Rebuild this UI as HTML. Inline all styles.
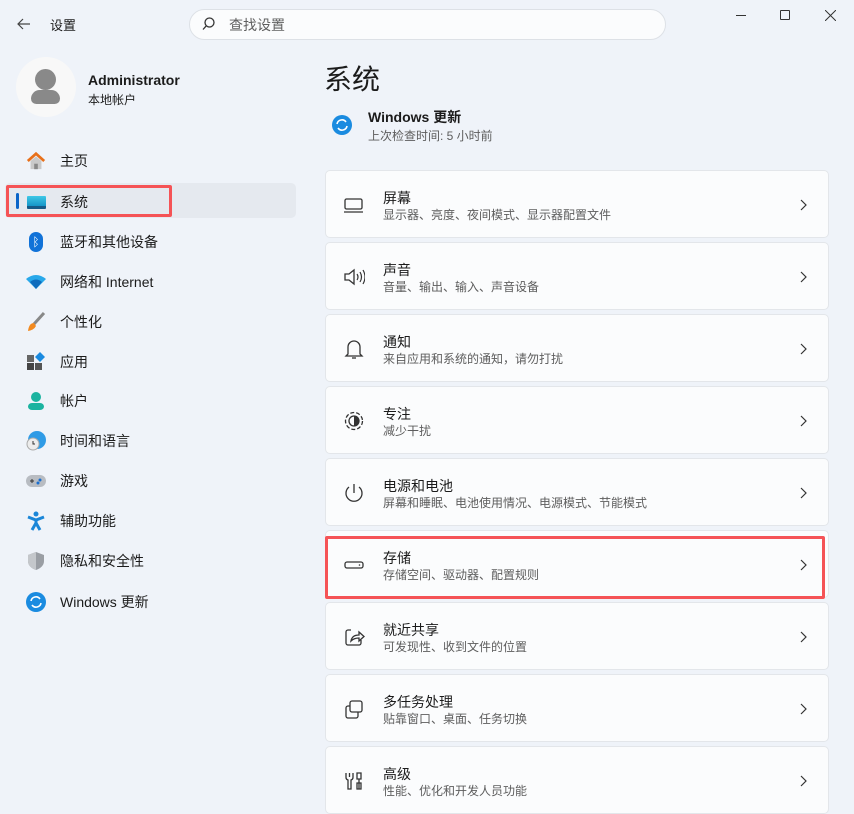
<!DOCTYPE html>
<html><head><meta charset="utf-8"><style>
*{box-sizing:border-box;margin:0;padding:0}
body{width:854px;height:799px;overflow:hidden;background:#eff3f9;font-family:"Liberation Sans","Noto Sans CJK SC",sans-serif;color:#1b1b1b;position:relative}
.abs{position:absolute}
.nav{position:absolute;left:26px;font-size:14px;display:flex;align-items:center}
.nav .ic{width:20px;height:20px;margin-right:14px;display:flex;align-items:center;justify-content:center}
.card{position:absolute;left:325px;width:504px;height:68px;background:#fbfcfd;border:1px solid #e3e6ea;border-radius:5px}
.card .t{position:absolute;left:57px;top:17px;font-size:14px}
.card .s{position:absolute;left:57px;top:35px;font-size:12px;color:#5d5d5d}
.card .i{position:absolute;left:17px;top:23px;width:22px;height:22px}
.card .ch{position:absolute;right:20px;top:28px;width:8px;height:12px}
</style></head><body>
<svg class="abs" style="left:16px;top:16px" width="16" height="16" viewBox="0 0 16 16"><path d="M14 8H2M7 3L2 8l5 5" stroke="#444" stroke-width="1.2" fill="none"/></svg>
<div class="abs" style="left:50px;top:15px;font-size:13px">设置</div>
<div class="abs" style="left:189px;top:9px;width:477px;height:31px;background:#fbfcfd;border:1px solid #dde1e6;border-radius:16px"></div>
<svg class="abs" style="left:201px;top:16px" width="16" height="16" viewBox="0 0 16 16"><circle cx="8.5" cy="6.5" r="4.5" stroke="#333" stroke-width="1.3" fill="none"/><path d="M5.3 9.8l-3.3 3.7" stroke="#333" stroke-width="1.3"/></svg>
<div class="abs" style="left:229px;top:15px;font-size:14px;color:#5f5f5f">查找设置</div>
<div class="abs" style="left:736px;top:15px;width:10px;height:1px;background:#333"></div>
<div class="abs" style="left:780px;top:10px;width:10px;height:10px;border:1px solid #333;border-radius:1px"></div>
<svg class="abs" style="left:825px;top:10px" width="11" height="11"><path d="M0 0L11 11M11 0L0 11" stroke="#333" stroke-width="1"/></svg>
<div class="abs" style="left:16px;top:57px;width:60px;height:60px;border-radius:50%;background:#f8f8f8"></div>
<div class="abs" style="left:35px;top:69px;width:21px;height:21px;border-radius:50%;background:#898989"></div>
<div class="abs" style="left:31px;top:90px;width:29px;height:14px;border-radius:10px 10px 6px 6px;background:#898989"></div>
<div class="abs" style="left:88px;top:72px;font-size:14px;font-weight:bold">Administrator</div>
<div class="abs" style="left:88px;top:91px;font-size:12px">本地帐户</div>
<div class="abs" style="left:5px;top:183px;width:291px;height:35px;background:#e5e9ef;border-radius:5px"></div>
<div class="abs" style="left:16px;top:193px;width:3px;height:16px;background:#0a64c8;border-radius:2px"></div>
<div class="abs" style="left:6px;top:185px;width:166px;height:32px;border:3px solid #f55356;border-radius:2px"></div>
<div class="nav" style="top:151px"><div class="ic"><svg width="22" height="20" viewBox="0 0 22 20"><path d="M2 10L11 2l9 8" stroke="#e8701a" stroke-width="3" fill="none"/><path d="M5 10v9h12v-9L11 5z" fill="#c9c9c9"/><rect x="9" y="13" width="4" height="6" fill="#888"/></svg></div>主页</div>
<div class="nav" style="top:192px"><div class="ic"><div style="width:19px;height:13px;background:linear-gradient(#3fc8e6,#1596c7);border-bottom:3px solid #155a87;border-radius:1px"></div></div>系统</div>
<div class="nav" style="top:232px"><div class="ic"><div style="width:14px;height:20px;border-radius:7px;background:#1172d8;color:#fff;font-size:12px;text-align:center;line-height:20px">ᛒ</div></div>蓝牙和其他设备</div>
<div class="nav" style="top:272px"><div class="ic"><svg width="20" height="16" viewBox="0 0 20 16"><path d="M0 5Q10-3 20 5L10 15z" fill="#28a8ea"/><path d="M4 8Q10 3 16 8L10 15z" fill="#0f6cbd"/></svg></div>网络和 Internet</div>
<div class="nav" style="top:312px"><div class="ic"><svg width="20" height="20"><path d="M18 1L8 12" stroke="#888" stroke-width="3"/><path d="M8 11q-5 0-6 8q6-1 8-5z" fill="#f28a20"/></svg></div>个性化</div>
<div class="nav" style="top:352px"><div class="ic"><svg width="20" height="20"><rect x="1" y="3" width="7" height="7" fill="#666"/><rect x="1" y="11" width="7" height="7" fill="#444"/><rect x="9" y="11" width="7" height="7" fill="#555"/><path d="M14 0l5 5-5 5-5-5z" fill="#1a8ae0"/></svg></div>应用</div>
<div class="nav" style="top:391px"><div class="ic"><svg width="20" height="20"><circle cx="10" cy="6" r="5" fill="#1bb3a0"/><rect x="2" y="12" width="16" height="7" rx="4" fill="#1bb3a0"/></svg></div>帐户</div>
<div class="nav" style="top:431px"><div class="ic"><svg width="20" height="20"><circle cx="11" cy="9" r="9" fill="#2f9be6"/><circle cx="7" cy="13" r="6" fill="#ececec" stroke="#aaa"/><path d="M7 10v3h2" stroke="#333" fill="none"/></svg></div>时间和语言</div>
<div class="nav" style="top:471px"><div class="ic"><svg width="20" height="14"><rect x="0" y="1" width="20" height="12" rx="6" fill="#b8bcc2"/><circle cx="14" cy="6" r="1.5" fill="#1a6fd0"/><circle cx="12" cy="9" r="1.5" fill="#1a6fd0"/><path d="M4 7h4M6 5v4" stroke="#333"/></svg></div>游戏</div>
<div class="nav" style="top:511px"><div class="ic"><svg width="20" height="20"><circle cx="10" cy="3" r="2.5" fill="#1a86d8"/><path d="M2 6l8 3 8-3M10 9v3l-4 7M10 12l4 7" stroke="#1a86d8" stroke-width="3" fill="none"/></svg></div>辅助功能</div>
<div class="nav" style="top:551px"><div class="ic"><svg width="18" height="20"><path d="M9 1l8 3v6q0 6-8 9-8-3-8-9V4z" fill="#9a9ea4"/><path d="M9 1v18q-8-3-8-9V4z" fill="#c4c7cb"/></svg></div>隐私和安全性</div>
<div class="nav" style="top:592px"><div class="ic"><svg width="20" height="20"><circle cx="10" cy="10" r="10" fill="#1a8be0"/><path d="M5 9a5 5 0 0 1 9-2M15 11a5 5 0 0 1-9 2" stroke="#fff" stroke-width="1.6" fill="none"/></svg></div>Windows 更新</div>
<div class="abs" style="left:324px;top:58px;font-size:28px">系统</div>
<svg class="abs" style="left:332px;top:115px" width="20" height="20"><circle cx="10" cy="10" r="10" fill="#1a8be0"/><path d="M5 9a5 5 0 0 1 9-2M15 11a5 5 0 0 1-9 2" stroke="#fff" stroke-width="1.6" fill="none"/></svg>
<div class="abs" style="left:368px;top:107px;font-size:14px;font-weight:bold">Windows 更新</div>
<div class="abs" style="left:368px;top:127px;font-size:12px;color:#5d5d5d">上次检查时间: 5 小时前</div>

<div class="card" style="top:170px"><svg class="i" viewBox="0 0 22 22"><rect x="2" y="5" width="17" height="10" rx="1.5" stroke="#333" stroke-width="1.3" fill="none"/><path d="M1 18h19" stroke="#333" stroke-width="1.3"/></svg><div class="t">屏幕</div><div class="s">显示器、亮度、夜间模式、显示器配置文件</div><svg class="ch"><path d="M1 1l5 5-5 5" stroke="#333" fill="none" stroke-width="1.2"/></svg></div>
<div class="card" style="top:242px"><svg class="i" viewBox="0 0 22 22"><path d="M2 8h4l5-4v14l-5-4H2z" stroke="#333" stroke-width="1.3" fill="none"/><path d="M14 8q2 3 0 6M17 6q3 5 0 10M20 4q4 7 0 14" stroke="#333" stroke-width="1.2" fill="none"/></svg><div class="t">声音</div><div class="s">音量、输出、输入、声音设备</div><svg class="ch"><path d="M1 1l5 5-5 5" stroke="#333" fill="none" stroke-width="1.2"/></svg></div>
<div class="card" style="top:314px"><svg class="i" viewBox="0 0 22 22"><path d="M5 16V9a6 6 0 0 1 12 0v7l2 2H3z" stroke="#333" stroke-width="1.3" fill="none"/><path d="M9 20h4" stroke="#333" stroke-width="1.3"/></svg><div class="t">通知</div><div class="s">来自应用和系统的通知，请勿打扰</div><svg class="ch"><path d="M1 1l5 5-5 5" stroke="#333" fill="none" stroke-width="1.2"/></svg></div>
<div class="card" style="top:386px"><svg class="i" viewBox="0 0 22 22"><circle cx="11" cy="11" r="8.5" stroke="#333" stroke-width="1.3" fill="none" stroke-dasharray="4 2"/><circle cx="11" cy="11" r="5" stroke="#333" stroke-width="1.3" fill="none"/><path d="M11 6a5 5 0 0 1 0 10z" fill="#333"/></svg><div class="t">专注</div><div class="s">减少干扰</div><svg class="ch"><path d="M1 1l5 5-5 5" stroke="#333" fill="none" stroke-width="1.2"/></svg></div>
<div class="card" style="top:458px"><svg class="i" viewBox="0 0 22 22"><path d="M11 2v9M6 5a8 8 0 1 0 10 0" stroke="#333" stroke-width="1.3" fill="none"/></svg><div class="t">电源和电池</div><div class="s">屏幕和睡眠、电池使用情况、电源模式、节能模式</div><svg class="ch"><path d="M1 1l5 5-5 5" stroke="#333" fill="none" stroke-width="1.2"/></svg></div>
<div class="card" style="top:530px"><svg class="i" viewBox="0 0 22 22"><rect x="2" y="8" width="18" height="6" rx="2" stroke="#333" stroke-width="1.3" fill="none"/><circle cx="16.5" cy="11" r=".8" fill="#333"/></svg><div class="t">存储</div><div class="s">存储空间、驱动器、配置规则</div><svg class="ch"><path d="M1 1l5 5-5 5" stroke="#333" fill="none" stroke-width="1.2"/></svg></div>
<div class="abs" style="left:325px;top:536px;width:500px;height:63px;border:3px solid #f55356;border-radius:2px"></div>
<div class="card" style="top:602px"><svg class="i" viewBox="0 0 22 22"><path d="M8 4H5a2 2 0 0 0-2 2v11a2 2 0 0 0 2 2h11a2 2 0 0 0 2-2v-3" stroke="#333" stroke-width="1.3" fill="none"/><path d="M8 15q1-6 8-6V6l5 4.5-5 4.5v-3q-5 0-8 3z" stroke="#333" stroke-width="1.3" fill="none"/></svg><div class="t">就近共享</div><div class="s">可发现性、收到文件的位置</div><svg class="ch"><path d="M1 1l5 5-5 5" stroke="#333" fill="none" stroke-width="1.2"/></svg></div>
<div class="card" style="top:674px"><svg class="i" viewBox="0 0 22 22"><rect x="7" y="3" width="12" height="11" rx="2" stroke="#333" stroke-width="1.3" fill="none"/><path d="M7 8H5a2 2 0 0 0-2 2v8a2 2 0 0 0 2 2h8a2 2 0 0 0 2-2v-4" stroke="#333" stroke-width="1.3" fill="none"/></svg><div class="t">多任务处理</div><div class="s">贴靠窗口、桌面、任务切换</div><svg class="ch"><path d="M1 1l5 5-5 5" stroke="#333" fill="none" stroke-width="1.2"/></svg></div>
<div class="card" style="top:746px"><svg class="i" viewBox="0 0 22 22"><path d="M3 3v4a3 3 0 0 0 2 3v9h3v-9a3 3 0 0 0 2-3V3M6.5 3v4" stroke="#333" stroke-width="1.3" fill="none"/><path d="M14 3h4v6h-4zM16 9v10M14 13h4v6h-4z" stroke="#333" stroke-width="1.3" fill="none"/></svg><div class="t">高级</div><div class="s">性能、优化和开发人员功能</div><svg class="ch"><path d="M1 1l5 5-5 5" stroke="#333" fill="none" stroke-width="1.2"/></svg></div>
</body></html>
